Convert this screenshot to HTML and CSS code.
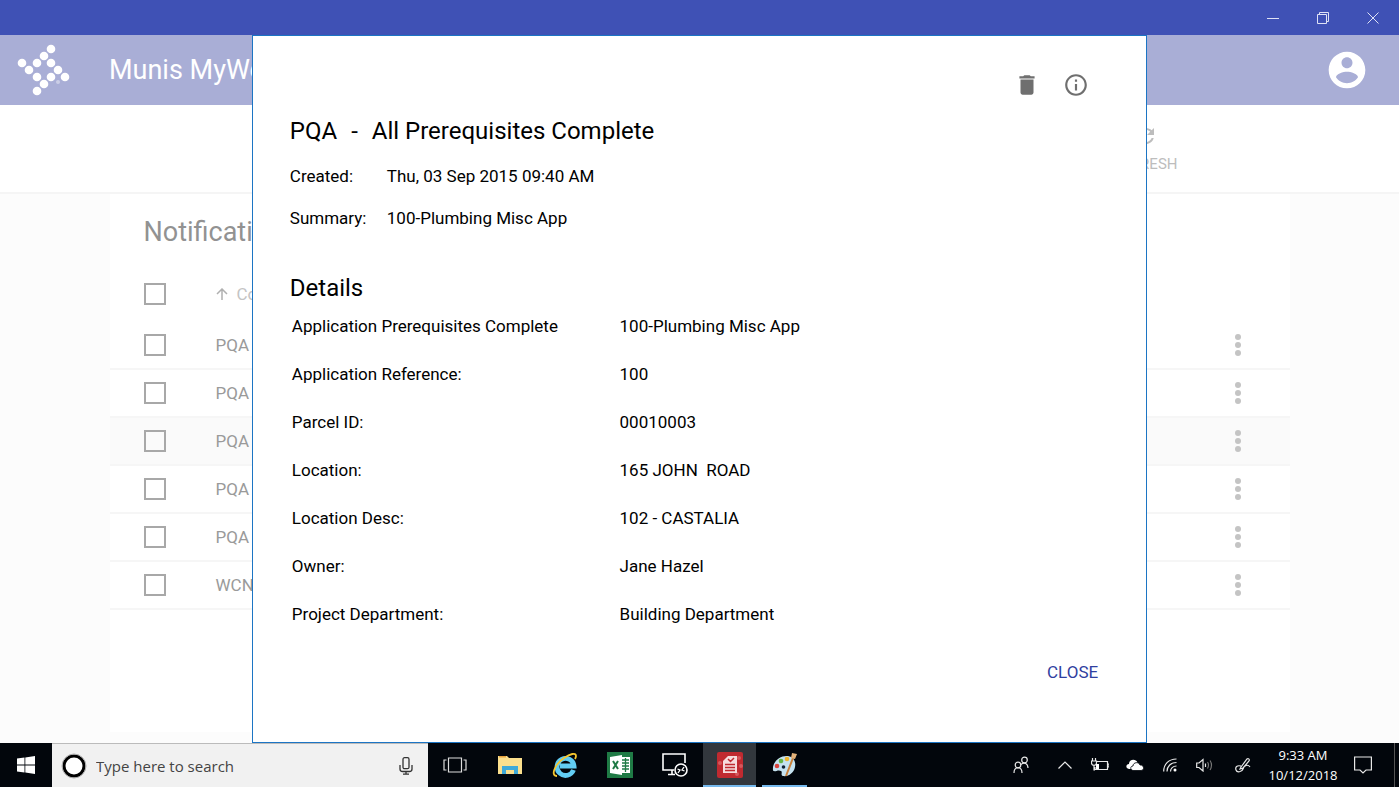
FILE: index.html
```html
<!DOCTYPE html>
<html lang="en">
<head>
    <meta charset="UTF-8">
    <meta name="viewport" content="width=device-width, initial-scale=1.0">
    <title>Munis MyWork</title>
    <link rel="stylesheet" href="styles.css">
</head>
<body>
    <div class="titlebar">
        <button aria-label="Minimize"><svg width="12" height="12" viewBox="0 0 12 12"><path d="M0 6.500h12"/></svg></button>
        <button aria-label="Restore"><svg width="12" height="12" viewBox="0 0 12 12"><path d="M.5 2.500h9v9h-9zM2.500 2.500v-2h9v9h-2"/></svg></button>
        <button aria-label="Close window"><svg width="12" height="12" viewBox="0 0 12 12"><path d="M.5.5l11 11M11.500.5l-11 11"/></svg></button>
    </div>

    <div class="app">
        <header class="header">
            <svg class="logo" width="54" height="54" viewBox="0 0 54 54">
                <circle cx="35" cy="6" r="4.300"/><circle cx="28" cy="13" r="4.300"/>
                <circle cx="6" cy="20" r="4.300"/><circle cx="21" cy="20" r="4.300"/><circle cx="35" cy="20" r="4.300"/>
                <circle cx="13" cy="27" r="4.300"/><circle cx="42" cy="27" r="4.300"/>
                <circle cx="21" cy="34" r="4.300"/><circle cx="35" cy="34" r="4.300"/><circle cx="49" cy="34" r="4.300"/>
                <circle cx="28" cy="41" r="4.300"/><circle cx="21" cy="48" r="4.300"/>
                <circle cx="42" cy="39" r="2" opacity=".4"/>
            </svg>
            <h1>Munis MyWork</h1>
            <button class="account" aria-label="Account">
                <svg width="44" height="44" viewBox="0 0 24 24"><path d="M12 2C6.480 2 2 6.480 2 12s4.480 10 10 10 10-4.480 10-10S17.520 2 12 2zm0 3c1.660 0 3 1.340 3 3s-1.340 3-3 3-3-1.340-3-3 1.340-3 3-3zm0 14.200c-2.500 0-4.710-1.280-6-3.220.03-1.990 4-3.080 6-3.080 1.990 0 5.970 1.090 6 3.080-1.290 1.940-3.500 3.220-6 3.220z"/></svg>
            </button>
        </header>

        <div class="toolbar">
            <div class="toolbar-inner">
                <button class="refresh">
                    <svg width="24" height="24" viewBox="0 0 24 24"><path d="M17.650 6.350C16.200 4.900 14.210 4 12 4c-4.420 0-7.990 3.580-7.990 8s3.570 8 7.990 8c3.730 0 6.840-2.550 7.730-6h-2.080c-.82 2.330-3.040 4-5.650 4-3.310 0-6-2.690-6-6s2.690-6 6-6c1.660 0 3.140.69 4.220 1.780L13 11h7V4l-2.350 2.350z"/></svg>
                    REFRESH
                </button>
            </div>
        </div>

        <main class="card">
            <h2>Notifications</h2>
            <table class="list">
                <thead>
                    <tr>
                        <th class="check"><input type="checkbox" aria-label="Select all"></th>
                        <th><svg width="12" height="12" viewBox="0 0 12 12"><path d="M6 12V1M1 6l5-5 5 5"/></svg>Code</th>
                        <th class="more"></th>
                    </tr>
                </thead>
                <tbody>
                    <tr>
                        <td class="check"><input type="checkbox" aria-label="Select PQA"></td>
                        <td>PQA</td>
                        <td class="more"><button aria-label="More"><svg width="6" height="22" viewBox="0 0 6 22"><circle cx="3" cy="3" r="3"/><circle cx="3" cy="11" r="3"/><circle cx="3" cy="19" r="3"/></svg></button></td>
                    </tr>
                    <tr>
                        <td class="check"><input type="checkbox" aria-label="Select PQA"></td>
                        <td>PQA</td>
                        <td class="more"><button aria-label="More"><svg width="6" height="22" viewBox="0 0 6 22"><circle cx="3" cy="3" r="3"/><circle cx="3" cy="11" r="3"/><circle cx="3" cy="19" r="3"/></svg></button></td>
                    </tr>
                    <tr class="current">
                        <td class="check"><input type="checkbox" aria-label="Select PQA"></td>
                        <td>PQA</td>
                        <td class="more"><button aria-label="More"><svg width="6" height="22" viewBox="0 0 6 22"><circle cx="3" cy="3" r="3"/><circle cx="3" cy="11" r="3"/><circle cx="3" cy="19" r="3"/></svg></button></td>
                    </tr>
                    <tr>
                        <td class="check"><input type="checkbox" aria-label="Select PQA"></td>
                        <td>PQA</td>
                        <td class="more"><button aria-label="More"><svg width="6" height="22" viewBox="0 0 6 22"><circle cx="3" cy="3" r="3"/><circle cx="3" cy="11" r="3"/><circle cx="3" cy="19" r="3"/></svg></button></td>
                    </tr>
                    <tr>
                        <td class="check"><input type="checkbox" aria-label="Select PQA"></td>
                        <td>PQA</td>
                        <td class="more"><button aria-label="More"><svg width="6" height="22" viewBox="0 0 6 22"><circle cx="3" cy="3" r="3"/><circle cx="3" cy="11" r="3"/><circle cx="3" cy="19" r="3"/></svg></button></td>
                    </tr>
                    <tr>
                        <td class="check"><input type="checkbox" aria-label="Select WCN"></td>
                        <td>WCN</td>
                        <td class="more"><button aria-label="More"><svg width="6" height="22" viewBox="0 0 6 22"><circle cx="3" cy="3" r="3"/><circle cx="3" cy="11" r="3"/><circle cx="3" cy="19" r="3"/></svg></button></td>
                    </tr>
                </tbody>
            </table>
        </main>

        <div class="dialog" role="dialog" aria-labelledby="dialog-title">
            <div class="dialog-tools">
                <button aria-label="Delete"><svg width="26" height="26" viewBox="0 0 24 24"><path d="M6 19c0 1.100.9 2 2 2h8c1.100 0 2-.9 2-2V7H6v12zM19 4h-3.500l-1-1h-5l-1 1H5v2h14V4z"/></svg></button>
                <button aria-label="Info"><svg width="26" height="26" viewBox="0 0 24 24"><path d="M11 17h2v-6h-2v6zm1-15C6.480 2 2 6.480 2 12s4.480 10 10 10 10-4.480 10-10S17.520 2 12 2zm0 18c-4.410 0-8-3.590-8-8s3.590-8 8-8 8 3.590 8 8-3.590 8-8 8zM11 9h2V7h-2v2z"/></svg></button>
            </div>
            <h2 class="dialog-title" id="dialog-title"><span>PQA</span><span>-</span><span>All Prerequisites Complete</span></h2>
            <dl class="meta">
                <dt>Created:</dt>
                <dd>Thu, 03 Sep 2015 09:40 AM</dd>
                <dt>Summary:</dt>
                <dd>100-Plumbing Misc App</dd>
            </dl>
            <h3>Details</h3>
            <table class="details">
                <tr><th>Application Prerequisites Complete</th><td>100-Plumbing Misc App</td></tr>
                <tr><th>Application Reference:</th><td>100</td></tr>
                <tr><th>Parcel ID:</th><td>00010003</td></tr>
                <tr><th>Location:</th><td class="address">165 JOHN  ROAD</td></tr>
                <tr><th>Location Desc:</th><td>102 - CASTALIA</td></tr>
                <tr><th>Owner:</th><td>Jane Hazel</td></tr>
                <tr><th>Project Department:</th><td>Building Department</td></tr>
            </table>
            <div class="dialog-actions">
                <button class="close-btn">CLOSE</button>
            </div>
        </div>
    </div>

    <footer class="taskbar">
        <button class="start" aria-label="Start"><svg width="18" height="18" viewBox="0 0 18 18"><path d="M0 2.600l7.500-1v7H0zM8.300 1.500L18 0v8.600H8.300zM0 9.400h7.500v7L0 15.400zM8.300 9.400H18V18l-9.700-1.500z" fill="#fff"/></svg></button>
        <div class="search">
            <svg width="26" height="26" viewBox="0 0 26 26"><circle cx="13" cy="13" r="10" fill="#fff" stroke="#000" stroke-width="3"/><circle cx="13" cy="13" r="12" fill="none" stroke="#aaa"/></svg>
            <input type="text" placeholder="Type here to search" aria-label="Search">
            <button aria-label="Speak"><svg width="14" height="18" viewBox="0 0 14 18" fill="none" stroke="#333" stroke-width="1.300"><rect x="4" y=".7" width="6" height="11" rx="1.500"/><path d="M1 8v4c0 1.500 1 2.500 2.500 2.500h7c1.500 0 2.500-1 2.500-2.500V8M7 14.500V17M4 17.200h6"/></svg></button>
        </div>
        <div class="apps">
            <button aria-label="Task view"><svg width="24" height="16" viewBox="0 0 24 16" fill="none" stroke="#ddd" stroke-width="1.200"><path d="M5.500 1h13v14h-13zM3.500 3h-2.500v10h2.500M20.500 3H23v10h-2.500"/></svg></button>
            <button aria-label="File Explorer"><svg width="24" height="20" viewBox="0 0 24 20"><path d="M0 1h9l2 2h13v16H0z" fill="#fbdf8d"/><path d="M1 1h7v1.500H1z" fill="#e8a33d"/><path d="M4 19v-8h16v8h-4v-4H8v4z" fill="#3fa9d8"/></svg></button>
            <button aria-label="Internet Explorer"><svg width="26" height="26" viewBox="0 0 26 26" fill="none"><path d="M21.500 18A8.500 8.500 0 1 1 22 14H8" stroke="#62cdf4" stroke-width="4.800"/><path d="M5 24C-2 24 3 12 12 6c6-4 12-6 12-2 0 1-.5 2-1 3" stroke="#f6c62f" stroke-width="1.800"/></svg></button>
            <button aria-label="Excel"><svg width="26" height="26" viewBox="0 0 26 26"><path d="M0 0h26v26H0z" fill="#1f7a45"/><path d="M14 5h9v16h-9z" fill="#fff"/><path d="M14 8h8M14 11h8M14 14h8M14 17h8M18.500 6v14" stroke="#1f7a45" stroke-width="1.300"/><path d="M3 5l12-2v20L3 21z" fill="#fff"/><path d="M6 9l5 8M11 9l-5 8" stroke="#1f7a45" stroke-width="2"/></svg></button>
            <button aria-label="Remote desktop"><svg width="26" height="24" viewBox="0 0 26 24" fill="none" stroke="#fff" stroke-width="1.600"><path d="M12 17H1V1h22v9M10 17v4M6 21.500h7"/><circle cx="19" cy="17" r="6"/><path d="M15.500 16l2.500 1-2 3M22.500 18l-2.500-1 2-3" stroke-width="1.300"/></svg></button>
            <button class="active" aria-label="Munis MyWork"><svg width="26" height="26" viewBox="0 0 26 26"><rect width="26" height="26" rx="2" fill="#c02a30"/><g fill="#d4585d"><circle cx="3" cy="11" r="2"/><circle cx="22" cy="6" r="2"/><circle cx="24" cy="14" r="2"/><circle cx="20" cy="22" r="2"/></g><path d="M6 9l5-5h9v17H6z" fill="#f6dcdd"/><path d="M8 12.500h10M8 15.500h10M8 18.500h10M11 7l2.500 2.500L17 6" fill="none" stroke="#c02a30" stroke-width="1.500"/></svg></button>
            <button class="open" aria-label="Paint"><svg width="26" height="26" viewBox="0 0 26 26"><path d="M1 18C0 10 8 3 16 4c6 1 8 6 7 11-1 6-7 10-12 9-3-1 0-4-2-5-3-2-7 2-8-1z" fill="#c5e2f0"/><circle cx="5" cy="14" r="2.300" fill="#d9443c"/><circle cx="9" cy="9" r="2.300" fill="#66b545"/><circle cx="15" cy="7" r="2.300" fill="#f0b52c"/><circle cx="11.500" cy="15" r="1.800" fill="#123"/><path d="M14 24L21 6" stroke="#c9803a" stroke-width="2"/><path d="M19 6l1-5 5 1-2 5z" fill="#e3b27a"/></svg></button>
        </div>
        <div class="tray">
            <button class="people" aria-label="People"><svg width="16" height="18" viewBox="0 0 16 18"><circle cx="11.500" cy="4" r="2.800"/><circle cx="5" cy="9" r="2.800"/><path d="M1 17c0-7 8-7 8 0M8 8.500c3-3 7-1 7 3.500"/></svg></button>
            <button aria-label="Show hidden icons"><svg width="14" height="8" viewBox="0 0 14 8"><path d="M.5 7.500L7 1l6.500 6.500"/></svg></button>
            <button aria-label="Battery"><svg width="18" height="14" viewBox="0 0 18 14"><path d="M6 3.500h10.500v8H4V9M16.500 6H18v3h-1.500M1.500 0v3M4.500 0v3M.5 3h5v2c0 3-5 3-5 0zM3 7v5h1"/><path d="M5 6h3v5H5z" fill="#fff" stroke="none"/></svg></button>
            <button aria-label="OneDrive"><svg width="18" height="12" viewBox="0 0 18 12"><path d="M3 10C-1 9.500 0 5 3 5 3 0 10-.5 11.500 3.500L8 5l-3 5z" fill="#fff" stroke="none"/><path d="M7 11.500c-3-.5-3-4.500 0-4.500 0-4 6-4.500 7-1 4-.5 5 5 1 5.500z" fill="#fff" stroke="#02060c" stroke-width=".8"/></svg></button>
            <button aria-label="Wi-Fi"><svg width="14" height="14" viewBox="0 0 14 14"><path d="M.7 13.500C.7 6 6 1 13.500 1M4 13.500C4 8 8 4.500 13.500 4.500M7.500 13.500c0-3 2.500-5.500 6-5.500"/><circle cx="12" cy="12" r="1.500" fill="#fff" stroke="none"/></svg></button>
            <button aria-label="Volume"><svg width="18" height="14" viewBox="0 0 18 14"><path d="M.7 5v4.500H3l4 3.500V1.500L3 5zM9.500 5.500v3.500"/><path d="M11.500 4q2 3 0 6.500M14 2.500q3 4.500 0 9.500" stroke="#777"/></svg></button>
            <button class="ink" aria-label="Windows Ink"><svg width="16" height="16" viewBox="0 0 16 16"><path d="M6 10l6-8c1-1 3 0 2 2l-6 7-3 1zM6 9C2 8 0 10 1 13s6 2 7-1c1-4 5-5 7-2"/></svg></button>
            <div class="clock"><span>9:33 AM</span><span>10/12/2018</span></div>
            <button class="notices" aria-label="Action center"><svg width="18" height="18" viewBox="0 0 18 18"><path d="M.6 1h16.800v13H12l-3 3-3-3H.6z"/></svg></button>
        </div>
    </footer>
</body>
</html>
```
FILE: styles.css
```css
* {
    box-sizing: border-box;
}
body {
    margin: 0;
    min-height: 100vh;
    display: flex;
    flex-direction: column;
    font-family: Roboto, sans-serif;
    font-size: 17px;
    color: #000;
    background-color: #fcfcfc;
}
h1, h2, h3 {
    margin: 0;
    font-weight: 400;
}
button {
    display: flex;
    align-items: center;
    justify-content: center;
    padding: 0;
    border: none;
    background: none;
    font-family: inherit;
    cursor: pointer;
}
.titlebar {
    height: 35px;
    display: flex;
    justify-content: flex-end;
    padding-right: 1px;
    background-color: #3f51b5;
}
.titlebar button {
    width: 50px;
}
.titlebar svg {
    fill: none;
    stroke: #dfe2f5;
}

/* main window */
.app {
    position: relative;
    flex: 1;
    display: flex;
    flex-direction: column;
}
.header {
    height: 70px;
    display: flex;
    align-items: center;
    padding: 0 30px 0 16px;
    background-color: #a9aed6;
}
.logo, .account svg {
    fill: #fff;
}
.header h1 {
    flex: 1;
    margin-left: 39px;
    font-size: 27px;
    color: #fff;
}
.toolbar {
    height: 89px;
    background-color: #fff;
    border-bottom: 2px solid #f5f5f5;
}
.toolbar-inner {
    max-width: 1180px;
    height: 100%;
    margin: 0 auto;
    padding-right: 112px;
    display: flex;
    justify-content: flex-end;
    align-items: center;
}
.refresh {
    flex-direction: column;
    gap: 6px;
    font-size: 15px;
    line-height: 20px;
    color: #bdbdbd;
}
.refresh svg {
    fill: #bdbdbd;
}
.card {
    flex: 1;
    width: 100%;
    max-width: 1180px;
    margin: 0 auto 11px;
    padding-top: 22px;
    background-color: #fff;
}
.card h2 {
    padding-left: 34px;
    font-size: 27px;
    line-height: 32px;
    color: #929292;
}
.list {
    width: 100%;
    margin-top: 18px;
    border-collapse: collapse;
    color: #9a9a9a;
}
.list th {
    height: 55px;
    padding: 0;
    text-align: left;
    font-weight: 400;
    color: #c4c4c4;
}
.list th svg {
    margin-right: 9px;
    fill: none;
    stroke: #b0b0b0;
    stroke-width: 1.5;
}
.list td {
    height: 48px;
    padding: 0;
    border-bottom: 2px solid #f6f6f6;
}
.list .check {
    width: 106px;
    padding-left: 34px;
}
.list .more {
    width: 72px;
}
.list .more button {
    width: 40px;
    height: 40px;
}
.list .more svg {
    fill: #c4c4c4;
}
.list .current {
    background-color: #fafafa;
}
.list input {
    display: block;
    appearance: none;
    width: 22px;
    height: 22px;
    margin: 0;
    border: 2px solid #a8a8a8;
}

/* notification dialog */
.dialog {
    position: absolute;
    top: 0;
    bottom: 0;
    left: 18%;
    right: 18%;
    padding: 36px 37px;
    background-color: #fff;
    border: 1px solid #1c75c4;
}
.dialog-tools {
    display: flex;
    justify-content: flex-end;
    gap: 23px;
    padding-right: 20px;
}
.dialog-tools svg {
    fill: #6f6f6f;
}
.dialog-title {
    display: flex;
    gap: 14px;
    margin-top: 17px;
    font-size: 24px;
    line-height: 32px;
}
.meta {
    display: grid;
    grid-template-columns: 97px 1fr;
    margin: 8px 0 35px;
    line-height: 42px;
}
.meta dd {
    margin: 0;
}
.dialog h3 {
    font-size: 24px;
    line-height: 28px;
}
.details {
    width: 100%;
    border-collapse: collapse;
}
.details th, .details td {
    height: 48px;
    padding: 0 2px;
    text-align: left;
    font-weight: 400;
}
.details th {
    width: 40%;
}
.details .address {
    white-space: pre;
}
.dialog-actions {
    display: flex;
    justify-content: flex-end;
    margin-top: 16px;
}
.close-btn {
    height: 36px;
    padding: 0 11px;
    font-size: 17px;
    color: #303f9f;
}

/* windows taskbar */
.taskbar {
    height: 44px;
    display: flex;
    background-color: #02060c;
    font-family: "Open Sans", sans-serif;
}
.start {
    width: 52px;
}
.search {
    flex: 0 1 376px;
    display: flex;
    align-items: center;
    padding: 0 15px 0 9px;
    background-color: #f1f1f1;
    border-top: 1px solid #bbb;
}
.search input {
    flex: 1;
    min-width: 0;
    margin: 0 8px 0 9px;
    padding: 0;
    border: none;
    background: none;
    font-family: inherit;
    font-size: 15px;
}
.search input::placeholder {
    color: #444;
}
.apps {
    display: flex;
    gap: 2px;
}
.apps button {
    width: 53px;
}
.apps .active {
    background-color: #32373d;
    box-shadow: inset 0 -2px #76b9ed;
}
.apps .open {
    width: 45px;
    margin-left: 4px;
    box-shadow: inset 0 -2px #76b9ed;
}
.tray {
    display: flex;
    margin-left: auto;
    margin-right: 4px;
    padding-right: 10px;
    border-right: 1px solid #555;
}
.tray button {
    width: 35px;
}
.tray .people {
    width: 52px;
}
.tray .ink, .tray .notices {
    width: 42px;
}
.tray svg {
    fill: none;
    stroke: #e8e8e8;
    stroke-width: 1.2;
}
.clock {
    width: 78px;
    display: flex;
    flex-direction: column;
    justify-content: center;
    align-items: center;
    font-size: 13px;
    line-height: 20px;
    color: #fff;
}
```
